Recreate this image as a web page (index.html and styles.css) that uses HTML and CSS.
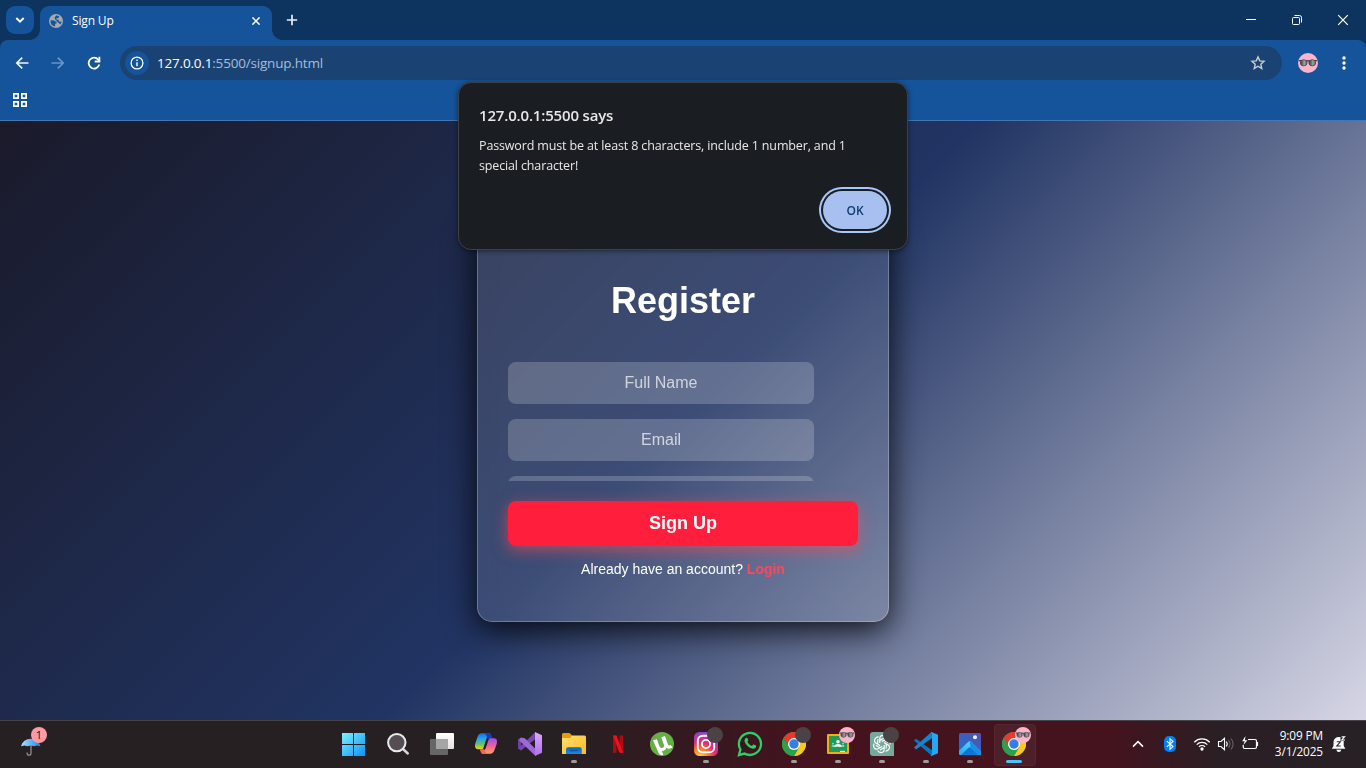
FILE: index.html
```html
<!DOCTYPE html>
<html lang="en">
<head>
<meta charset="utf-8">
<title>Sign Up</title>
<link rel="stylesheet" href="styles.css">
</head>
<body>
<svg class="defs" aria-hidden="true">
  <defs>
    <linearGradient id="win" x1="0" y1="0" x2="1" y2="1"><stop offset="0" stop-color="#7ff0ff"/><stop offset="1" stop-color="#0a93f7"/></linearGradient>
    <linearGradient id="copA" x1="0" y1="0" x2="0" y2="1"><stop offset="0" stop-color="#1a6fe0"/><stop offset=".35" stop-color="#22a5ee"/><stop offset=".7" stop-color="#6cc35b"/><stop offset="1" stop-color="#f4cf26"/></linearGradient>
    <linearGradient id="copB" x1="0" y1="0" x2="0" y2="1"><stop offset="0" stop-color="#9a50ee"/><stop offset=".5" stop-color="#f0609a"/><stop offset="1" stop-color="#ffa35a"/></linearGradient>
    <linearGradient id="folder" x1="0" y1="0" x2="1" y2="1"><stop offset="0" stop-color="#ffdd70"/><stop offset="1" stop-color="#fbbd24"/></linearGradient>
    <linearGradient id="fblue" x1="0" y1="0" x2="0" y2="1"><stop offset="0" stop-color="#0c62b8"/><stop offset="1" stop-color="#1b8be4"/></linearGradient>
    <radialGradient id="insta" cx=".25" cy="1.05" r="1.15"><stop offset="0" stop-color="#ffd75a"/><stop offset=".3" stop-color="#fa7e28"/><stop offset=".55" stop-color="#e02e70"/><stop offset=".78" stop-color="#b138b8"/><stop offset="1" stop-color="#5356e0"/></radialGradient>
    <linearGradient id="photo" x1="0" y1="1" x2="1" y2="0"><stop offset="0" stop-color="#1672d8"/><stop offset="1" stop-color="#5a50a8"/></linearGradient>
    <linearGradient id="hill" x1="0" y1="1" x2="1" y2="0"><stop offset="0" stop-color="#28a8f0"/><stop offset="1" stop-color="#62e0ff"/></linearGradient>
    <linearGradient id="tv" x1="0" y1="0" x2="0" y2="1"><stop offset="0" stop-color="#fff"/><stop offset="1" stop-color="#e2e2e2"/></linearGradient>
    <linearGradient id="vsR" x1="0" y1="0" x2="0" y2="1"><stop offset="0" stop-color="#dba8ff"/><stop offset="1" stop-color="#b070ea"/></linearGradient>
    <linearGradient id="umb" x1="0" y1="0" x2="1" y2="0"><stop offset="0" stop-color="#b5dcfb"/><stop offset=".5" stop-color="#61b4f7"/><stop offset="1" stop-color="#2586e0"/></linearGradient>
    <linearGradient id="lens" x1="0" y1="0" x2="1" y2="0"><stop offset="0" stop-color="#333"/><stop offset=".6" stop-color="#9aa5a2"/><stop offset="1" stop-color="#5a5a5a"/></linearGradient>
    <symbol id="chrome" viewBox="0 0 24 24">
      <circle cx="12" cy="12" r="12" fill="#2ca14b"/>
      <path d="M12 12 1.6 6A12 12 0 0 1 22.4 6Z" fill="#e53a2e"/>
      <path d="M12 6H22.4A12 12 0 0 1 12 24L17.2 15Z" fill="#fdc722"/>
      <path d="M1.6 6 6.8 15 12 10V6Z" fill="#e53a2e"/>
      <path d="M1.6 6 6.8 15 17.2 15 12 24A12 12 0 0 1 1.6 6Z" fill="#2ca14b"/>
      <circle cx="12" cy="12" r="6" fill="#fff"/><circle cx="12" cy="12" r="4.7" fill="#357de8"/>
    </symbol>
    <symbol id="glasses" viewBox="0 0 20 20">
      <circle cx="10" cy="10" r="10" fill="#fbb4cb"/>
      <path d="M1.2 7.6H3M8 7.9H12M17 7.6h1.8" stroke="#3a3034" stroke-width="1.3"/>
      <ellipse cx="5.7" cy="9.8" rx="3.4" ry="3.1" fill="url(#lens)" stroke="#4c4549" stroke-width=".8"/>
      <ellipse cx="14.3" cy="9.8" rx="3.4" ry="3.1" fill="url(#lens)" stroke="#4c4549" stroke-width=".8"/>
    </symbol>
  </defs>
</svg>

<header class="browser">
  <div class="tabstrip">
    <button class="tab-search"><svg width="10" height="6" viewBox="0 0 10 6"><path d="M1.3 1 5 4.6 8.7 1" fill="none" stroke="#fff" stroke-width="1.9"/></svg></button>
    <div class="tab">
      <svg width="14" height="14" viewBox="0 0 14 14"><circle cx="7" cy="7" r="7" fill="#a7a8aa"/><path d="M1.5 6.4 4.4 6.2 6.6 7.6 7.8 7.9 7.6 9.3 6.2 9.8 6 12.5A5.6 5.6 0 0 1 1.5 7ZM7.2 1.6A5.6 5.6 0 0 1 10.3 2.5L9.4 4 7.2 4.4 7.3 5.6 9.4 5.8 10.3 7.7 12.5 7.6A5.6 5.6 0 0 1 11.4 10.4L9.2 8.6 6.2 5.6 5.6 3.6Z" fill="#15539a"/></svg>
      <span class="tab-title">Sign Up</span>
      <svg width="8" height="8" viewBox="0 0 8 8"><path d="m.4.4 7.2 7.2M7.6.4.4 7.6" stroke="#fff" stroke-width="1.5"/></svg>
    </div>
    <svg class="plus" width="12" height="12" viewBox="0 0 12 12"><path d="M6 .8v10.4M.8 6h10.4" stroke="#e8f0f8" stroke-width="1.7"/></svg>
    <div class="window-buttons">
      <svg width="46" height="40" viewBox="0 0 46 40"><path d="M18 19.5h10" stroke="#fff"/></svg>
      <svg width="46" height="40" viewBox="0 0 46 40" fill="none" stroke="#fff"><rect x="18.5" y="17.5" width="7" height="7" rx="1"/><path d="M20.5 15.5h5a2 2 0 0 1 2 2v5"/></svg>
      <svg width="46" height="40" viewBox="0 0 46 40"><path d="m18.2 15.2 9.6 9.6M27.8 15.2l-9.6 9.6" stroke="#fff" stroke-width="1.2"/></svg>
    </div>
  </div>
  <div class="toolbar">
    <div class="nav">
      <svg width="14" height="14" viewBox="0 0 14 14" fill="none" stroke="#f1f6fc" stroke-width="1.7"><path d="M13.5 7H2M7.2 1.6 1.8 7l5.4 5.4"/></svg>
      <svg width="14" height="14" viewBox="0 0 14 14" fill="none" stroke="#6b95c9" stroke-width="1.7"><path d="M.5 7H12M6.8 1.6 12.2 7l-5.4 5.4"/></svg>
      <svg width="14" height="14" viewBox="0 0 14 14" fill="none" stroke="#fff" stroke-width="1.8"><path d="M12.3 8.6A5.4 5.4 0 1 1 11.2 3.6L12.3 4.8"/><path d="M12.4.8v4.7H7.7"/></svg>
    </div>
    <div class="omnibox">
      <span class="site-info"><svg width="14" height="14" viewBox="0 0 14 14"><circle cx="7" cy="7" r="5.9" fill="none" stroke="#fff" stroke-width="1.3"/><path d="M7 6.2v4M7 3.6v1.4" stroke="#fff" stroke-width="1.4"/></svg></span>
      <span class="url"><b>127.0.0.1</b>:5500/signup.html</span>
      <svg class="star" width="16" height="16" viewBox="0 0 16 16"><path d="m8 1.9 1.75 4 4.25.4-3.2 2.85.95 4.3L8 11.2l-3.75 2.25.95-4.3L2 6.3l4.25-.4Z" fill="none" stroke="#c9ccd0" stroke-width="1.4"/></svg>
    </div>
    <svg class="avatar" width="20" height="20"><use href="#glasses"/></svg>
    <svg class="dots" width="4" height="16" viewBox="0 0 4 16" fill="#fff"><circle cx="2" cy="3" r="1.7"/><circle cx="2" cy="8" r="1.7"/><circle cx="2" cy="13" r="1.7"/></svg>
  </div>
  <div class="bookmarks"><svg width="14" height="14" viewBox="0 0 14 14" fill="none" stroke="#fff" stroke-width="1.7"><path d="M.85.85h4.3v4.3H.85ZM8.85.85h4.3v4.3h-4.3ZM.85 8.85h4.3v4.3H.85ZM8.85 8.85h4.3v4.3h-4.3Z"/></svg></div>
</header>

<main class="page">
  <section class="card">
    <h1>Register</h1>
    <form>
      <div class="fields">
        <input type="text" placeholder="Full Name">
        <input type="email" placeholder="Email">
        <input type="password">
      </div>
      <button class="signup" type="button">Sign Up</button>
    </form>
    <p class="login">Already have an account? <a>Login</a></p>
  </section>
</main>

<div class="dialog" role="alertdialog">
  <h2>127.0.0.1:5500 says</h2>
  <p>Password must be at least 8 characters, include 1 number, and 1<br>special character!</p>
  <button class="ok">OK</button>
</div>

<footer class="taskbar">
  <div class="weather">
    <svg width="20" height="22" viewBox="0 0 20 22"><path d="M10 9v10.2a1.9 1.9 0 0 1-3.8 0v-.8" fill="none" stroke="#8d8d8d" stroke-width="1.3"/><path d="M0 12.2A10 9.6 0 0 1 19.5 12.2L16 11.6 13.2 12.2 10 11.5 6.5 12.2 3.5 11.5Z" fill="url(#umb)"/></svg>
    <span class="count">1</span>
  </div>
  <div class="apps">
    <div class="app"><svg width="24" height="24" viewBox="0 0 24 24"><path d="M0 1H11V12H0ZM12 1H23V12H12ZM0 13H11V24H0ZM12 13H23V24H12Z" fill="url(#win)"/></svg></div>
    <div class="app"><svg width="24" height="24" viewBox="0 0 24 24"><path d="m17.5 17.5 4.3 4" stroke="#d5d8da" stroke-width="2.4" stroke-linecap="round"/><circle cx="10.8" cy="10.6" r="8.7" fill="#554d51" stroke="#e8ebed" stroke-width="2"/></svg></div>
    <div class="app"><svg width="24" height="24" viewBox="0 0 24 24"><rect x="6" y="1" width="18" height="16" rx="1" fill="url(#tv)"/><rect x="0" y="7" width="18" height="16" rx="1" fill="#666"/><path d="M6 7h12v10H6Z" fill="#a5a5a5"/></svg></div>
    <div class="app"><svg width="24" height="24" viewBox="0 0 24 24"><path d="M16 1.2 17.6 5.3H14.2C12.8 5.3 12.4 6.5 12 8L9.6 15.4C9.2 16.7 8.5 17.2 7.3 17.2H3.7C1 17.2.6 14.2 1.3 11.6L3.5 5C4.3 2.6 5.5 1.2 8 1.2Z" fill="url(#copA)"/><path d="M14.6 1.2c2 0 2.5 1.2 3 2.8l.8 2.7h-4.2L13 5c-.6-1.9-1.3-3-3.2-3.8Z" fill="#153fb0"/><path d="M8 21.8 6.4 18h3.4c1.4 0 1.8-1.2 2.2-2.7l2.4-7c.4-1.4 1.1-2 2.3-2h3.6c2.7 0 3.1 3 2.4 5.6L20.5 18c-.8 2.4-2 3.8-4.5 3.8Z" fill="url(#copB)"/><path d="M9.4 21.8c-2 0-2.5-1.2-3-2.8l-.5-1.8h4.2l.9 1.7c.6 1.3 1.5 2.4 3.2 2.9Z" fill="#f8655c"/></svg></div>
    <div class="app"><svg width="24" height="24" viewBox="0 0 24 24"><path d="M0 7.2 3.2 5.6V18.4L0 16.8Z" fill="#6c4399"/><path d="M3 18.5 17.5 7V0L1 15.8Z" fill="#7648ae"/><path d="M3 5.5 6.8 6.2 17.5 17V24L1 8.2Z" fill="#9d68d8"/><path d="M17 0 24 3.2V20.8L17 24Z" fill="url(#vsR)"/></svg></div>
    <div class="app run"><svg width="24" height="24" viewBox="0 0 24 24"><path d="M0 2.5Q0 1 1.5 1H7.5L10.2 3.5V8H0Z" fill="#e39c10"/><path d="M0 6H8l2.2-2.5H22.5Q24 3.5 24 5V22H0Z" fill="url(#folder)"/><path d="M4 22V17.5Q4 15.2 6.3 15.2H17.5Q19.8 15.2 19.8 17.5V22Z" fill="url(#fblue)"/><path d="M8 18.5h8" stroke="#075496" stroke-width="1.2"/></svg></div>
    <div class="app"><svg width="24" height="24" viewBox="0 0 24 24"><path d="M7 3.5h3.5v17L7 21ZM13.5 3.5H17V21l-3.5-.5Z" fill="#b40710"/><path d="M7 3.5h3.6L17 21l-3.6-.5Z" fill="#ee111c"/></svg></div>
    <div class="app"><svg width="24" height="24" viewBox="0 0 24 24"><circle cx="12" cy="12" r="12" fill="#66ae46"/><path d="m2.9 8.2 4-1 2.2 6.3c.7 2 1.9 2.8 3.5 2.2 1.4-.5 1.8-1.6 1.2-3.3L11.2 5.2l3.8-1.3 2.8 8c.5 1.4 1.3 1.9 2.7 1.2l2.2 2.2c-2.5 2-4.9 1.8-6.3.2-.6 2.2-2.1 3.5-4.5 3.4l1.4 4.1c-1.7.4-3.2 0-4.2-1Z" fill="#fff"/></svg></div>
    <div class="app run"><svg width="24" height="24" viewBox="0 0 24 24"><rect width="24" height="24" rx="5.5" fill="url(#insta)"/><g fill="none" stroke="#fff" stroke-width="1.9"><rect x="3.8" y="3.8" width="16.4" height="16.4" rx="4.8"/><circle cx="12" cy="12" r="4.1"/></g><circle cx="16.8" cy="7" r="1.1" fill="#fff"/></svg><i class="badge"></i></div>
    <div class="app"><svg width="26" height="26" viewBox="0 0 24 24"><path d="m1.8 22.2 1.4-5.1A10.2 10.2 0 1 1 7 20.8Z" fill="none" stroke="#2bd267" stroke-width="2.1"/><path d="M8.1 6.5c.7-.6 1.3-.4 1.6.2l.7 1.7c.2.5-.5 1.2-.8 1.6.9 1.9 2.2 3.1 4.1 3.9l1.1-1.3c.4-.4.8-.2 2.2.6.8.4.8.6.7 1.2-.3 1.5-1.8 2.2-3.1 2-4.1-.9-6.4-3.5-7.5-6.4-.4-1.4 0-2.7 1-3.5Z" fill="#2bd267"/></svg></div>
    <div class="app run"><svg width="24" height="24"><use href="#chrome"/></svg><i class="badge"></i></div>
    <div class="app run"><svg width="24" height="24" viewBox="0 0 24 24"><rect x="1" y="2" width="22" height="20" rx="1" fill="#f4ac13"/><rect x="3" y="4" width="18" height="16" fill="#209b5b"/><circle cx="12" cy="9.7" r="1.8" fill="#fff"/><path d="M8 14.8c0-3.6 8-3.6 8 0Z" fill="#fff"/><path d="M5.5 14.8c0-2 2.6-2.3 2.6-.6v.6ZM15.9 14.8v-.6c0-1.7 2.6-1.4 2.6.6Z" fill="#a5dabf"/><circle cx="7" cy="11.6" r=".9" fill="#a5dabf"/><circle cx="17" cy="11.6" r=".9" fill="#a5dabf"/><path d="M14 18.8h5V20h-5Z" fill="#dff2e8"/></svg><svg class="badge-face" width="16" height="16"><use href="#glasses"/></svg></div>
    <div class="app run"><svg width="24" height="24" viewBox="0 0 24 24"><path d="M3 0H21Q24 0 24 3V24H3Q0 24 0 21V3Q0 0 3 0Z" fill="#76a99b"/><g fill="none" stroke="#fff" stroke-width="1.15"><path id="knot" d="M9.8 11V6.7Q9.8 3.5 12.8 3.4 15.3 3.4 16.4 5.5M9.8 8.4 14 6"/><use href="#knot" transform="rotate(60 12 12)"/><use href="#knot" transform="rotate(120 12 12)"/><use href="#knot" transform="rotate(180 12 12)"/><use href="#knot" transform="rotate(240 12 12)"/><use href="#knot" transform="rotate(300 12 12)"/></g></svg><i class="badge"></i></div>
    <div class="app run"><svg width="24" height="24" viewBox="0 0 24 24"><path d="M0 8.5 2 6.7 18 18.2V24Z" fill="#0876bd"/><path d="M0 15.6 17.5 0 18.2 6 2 17.5Z" fill="#1685ce"/><path d="M17.5 0 24 2.8V21.2L17.5 24 16.7 23.2 18 22V2L16.7.8Z" fill="#29a5f1"/></svg></div>
    <div class="app run"><svg width="24" height="24" viewBox="0 0 24 24"><rect x="1" y="1" width="22" height="22" rx="1.5" fill="url(#photo)"/><path d="M1.5 22.5 11 13 20 22.5 21.5 23H2.5Z" fill="#0877d7"/><path d="M1 18.8 10.3 9.8Q11.7 8.6 13.1 9.8L23 19.6V21.5Q23 23 21.5 23H20.5L12.6 15.6Q11.7 14.8 10.8 15.6L3 23H2.5Q1 23 1 21.5Z" fill="url(#hill)"/><path d="M13.1 9.8 23 19.6V21.5Q23 23 21.5 23H20.5L12.6 15.6 11.7 9.2Z" fill="#1590e4"/><circle cx="17" cy="5.2" r="2" fill="#e7f5ff"/></svg></div>
    <div class="app run active"><svg width="24" height="24"><use href="#chrome"/></svg><svg class="badge-face" width="16" height="16"><use href="#glasses"/></svg></div>
  </div>
  <div class="tray">
    <svg width="24" height="24" viewBox="0 0 24 24"><path d="m7 14.6 5-5 5 5" fill="none" stroke="#fff" stroke-width="1.5"/></svg>
    <svg width="24" height="24" viewBox="0 0 24 24"><rect x="6" y="4" width="12" height="16" rx="5" fill="#0080f5"/><path d="m8.8 9.1 6.2 5.5-3 2.7V6.7l3 2.7-6.2 5.5" fill="none" stroke="#fff" stroke-width="1.1"/></svg>
    <div class="status">
      <svg width="24" height="24" viewBox="0 0 24 24" fill="none" stroke="#fff" stroke-width="1.3"><path d="M4.3 10.2a10.8 10.8 0 0 1 15.4 0M6.7 12.6a7.5 7.5 0 0 1 10.6 0M9 14.8a4.3 4.3 0 0 1 6 0"/><circle cx="12" cy="17" r="1" fill="#fff"/></svg>
      <svg width="24" height="24" viewBox="0 0 24 24" fill="none" stroke="#fff" stroke-width="1.1"><path d="M4.5 9.5H7l3.5-3.2v11.4L7 14.5H4.5ZM12.3 9.5q1.8 2.5 0 5"/><path d="M14.5 8q3 4 0 8M17 6.5q4.2 5.5 0 11" stroke="#695e63"/></svg>
      <svg width="24" height="24" viewBox="0 0 24 24" fill="none" stroke="#fff" stroke-width="1.2"><path d="M10 7.5h7q1.5 0 1.5 1.5v6q0 1.5-1.5 1.5H6.7q-1.5 0-1.5-1.5v-2"/><path d="M19.3 10v4" stroke-width="1.6"/><path d="M7.5 4 4.2 9.2h2.5L5.4 13l4-4.8H6.9Z" fill="#fff" stroke="none"/></svg>
    </div>
    <div class="clock"><span class="time">9:09 PM</span><span class="date">3/1/2025</span></div>
    <svg class="bell" width="16" height="18" viewBox="0 0 16 18"><path d="M.8 13.8 2.5 11V6.7A5.2 5.2 0 0 1 8 2a6 6 0 0 1 1.5.2V6H12.7V11l1.7 2.8Z" fill="#fff"/><path d="M5.3 14.8h5Q9.8 17 7.8 17t-2.5-2.2Z" fill="#fff"/><path d="M5.8 6.8h3.6L5.8 11h3.9" fill="none" stroke="#282024" stroke-width="1.1"/><path d="M10.6 1.9h3L10.8 5h3.2" fill="none" stroke="#fff" stroke-width="1.1"/></svg>
  </div>
</footer>
</body>
</html>
```
FILE: styles.css
```css
* { box-sizing: border-box; }
body {
  margin: 0;
  width: 1366px;
  height: 768px;
  display: flex;
  flex-direction: column;
  overflow: hidden;
  background: #0c345e;
  font-family: "Open Sans", "Noto Sans", sans-serif;
}
svg { display: block; flex: none; }
button { border: 0; padding: 0; }
.defs { position: absolute; width: 0; height: 0; }

.browser { flex: none; height: 121px; }
.tabstrip { height: 40px; display: flex; align-items: center; background: #0c345e; }
.tab-search {
  width: 28px;
  height: 28px;
  margin-left: 6px;
  border-radius: 9px;
  background: #15539a;
  display: flex;
  align-items: center;
  justify-content: center;
}
.tab {
  align-self: flex-end;
  width: 232px;
  height: 34px;
  margin-left: 6px;
  padding: 0 12px 5px 9px;
  border-radius: 9px 9px 0 0;
  background: #15539a;
  display: flex;
  align-items: center;
  position: relative;
}
.tab::before, .tab::after {
  content: "";
  position: absolute;
  bottom: 0;
  width: 10px;
  height: 10px;
}
.tab::before { left: -10px; background: radial-gradient(circle at 0 0, transparent 9.5px, #15539a 10px); }
.tab::after { right: -10px; background: radial-gradient(circle at 100% 0, transparent 9.5px, #15539a 10px); }
.tab-title { flex: 1; margin-left: 9px; font-size: 12px; line-height: 16px; color: #fff; letter-spacing: -.15px; }
.plus { margin-left: 14px; }
.window-buttons { margin-left: auto; display: flex; }

.toolbar {
  height: 46px;
  display: flex;
  align-items: center;
  padding: 0 20px 0 15px;
  background: #15539a;
  border-radius: 8px 8px 0 0;
}
.nav { display: flex; gap: 22px; width: 105px; }
.omnibox {
  width: 1162px;
  height: 34px;
  padding: 0 16px 0 5px;
  border-radius: 17px;
  background: #1a4373;
  display: flex;
  align-items: center;
}
.site-info {
  width: 24px;
  height: 24px;
  border-radius: 50%;
  background: #15539a;
  display: flex;
  align-items: center;
  justify-content: center;
}
.url { flex: 1; margin-left: 8px; font-size: 13.5px; letter-spacing: -.19px; color: #a9bdd6; }
.url b { font-weight: 400; color: #fff; }
.avatar { margin-left: 16px; }
.dots { margin-left: 24px; }
.bookmarks {
  height: 35px;
  padding: 7px 13px;
  background: #15539a;
  border-bottom: 1px solid #4376b2;
}

.page {
  flex: 1;
  display: flex;
  justify-content: center;
  align-items: center;
  padding-top: 1px;
  background: linear-gradient(135deg, #1a1a2a, #213463 50%, #d6d6e5);
  font-family: "Liberation Sans", Arial, sans-serif;
}
.card {
  width: 412px;
  height: 402px;
  padding: 59px 30px 0;
  border: 1px solid rgba(255, 255, 255, .25);
  border-radius: 15px;
  background: rgba(255, 255, 255, .12);
  box-shadow: 0 8px 32px rgba(0, 0, 0, .85);
  text-align: center;
  color: #fff;
  backdrop-filter: blur(10px);
}
.card h1 { margin: 0 0 41px; font-size: 36px; line-height: 41px; }
.fields {
  height: 119px;
  overflow: hidden;
  display: flex;
  flex-direction: column;
  align-items: flex-start;
  gap: 15px;
}
.fields input {
  flex: none;
  width: 306px;
  height: 42px;
  border: 0;
  border-radius: 8px;
  background: rgba(255, 255, 255, .2);
  text-align: center;
  font: 16px "Liberation Sans", Arial, sans-serif;
}
.fields input::placeholder { color: rgba(255, 255, 255, .7); }
.signup {
  display: block;
  width: 350px;
  height: 45px;
  margin-top: 20px;
  border-radius: 8px;
  background: #ff1f3d;
  box-shadow: 0 4px 15px rgba(255, 71, 87, .6);
  color: #fff;
  font: bold 18px "Liberation Sans", Arial, sans-serif;
}
.login { margin: 15px 0 0; font-size: 14px; line-height: 16px; }
.login a { color: #ff4757; font-weight: bold; }

.dialog {
  position: absolute;
  left: 458px;
  top: 82px;
  width: 450px;
  height: 168px;
  padding: 22px 18px 0 20px;
  border: 1px solid #3e4144;
  border-radius: 13px;
  background: #1a1d21;
  box-shadow: 0 1px 5px rgba(0, 0, 0, .5);
  color: #e8e8e8;
}
.dialog h2 { margin: 0; font-size: 15px; line-height: 20px; font-weight: 600; letter-spacing: -.17px; }
.dialog p { margin: 11px 0 0; font-size: 12.5px; line-height: 20px; white-space: nowrap; letter-spacing: -.14px; }
.ok {
  display: block;
  width: 64px;
  height: 38px;
  margin: 15px 2px 0 auto;
  border-radius: 19px;
  background: #a8c0f0;
  box-shadow: 0 0 0 2px #1a1d21, 0 0 0 4px #a8c7fa;
  color: #0b3f70;
  font: 600 12px "Open Sans", "Noto Sans", sans-serif;
}

.taskbar {
  flex: none;
  height: 48px;
  display: flex;
  border-top: 1px solid #464246;
  background: linear-gradient(90deg, #272023 0, #272023 560px, #34191f 690px, #44131e 800px, #44131e 1110px, #2a1f24 1220px, #272024 100%);
}
.weather { width: 332px; padding: 13px 0 0 21px; position: relative; }
.count {
  position: absolute;
  left: 31px;
  top: 6px;
  width: 16px;
  height: 16px;
  border-radius: 50%;
  background: #ff99a4;
  color: #111;
  font-size: 11px;
  line-height: 16px;
  text-align: center;
}
.apps { display: flex; }
.app {
  width: 44px;
  height: 47px;
  padding-bottom: 1px;
  display: flex;
  align-items: center;
  justify-content: center;
  position: relative;
}
.run::after {
  content: "";
  position: absolute;
  left: 19px;
  bottom: 5px;
  width: 6px;
  height: 3px;
  border-radius: 2px;
  background: #a09a9e;
}
.active::before {
  content: "";
  position: absolute;
  left: 2px;
  top: 3px;
  width: 40px;
  height: 40px;
  border-radius: 4px;
  background: rgba(255, 255, 255, .05);
  border: 1px solid rgba(255, 255, 255, .04);
}
.active svg { position: relative; }
.active::after { left: 14px; width: 16px; background: #4cc2ff; }
.badge, .active .badge-face, .badge-face { position: absolute; left: 23px; top: 6px; width: 16px; height: 16px; }
.badge { border-radius: 50%; background: #4a4244; }
.tray { margin-left: 90px; padding-bottom: 1px; display: flex; align-items: center; gap: 8px; }
.status { display: flex; }
.clock {
  width: 61px;
  margin: -2px 0 0 -8px;
  text-align: right;
  color: #fff;
  font-size: 11.8px;
  line-height: 16px;
  letter-spacing: -.12px;
}
.clock span { display: block; }
```
